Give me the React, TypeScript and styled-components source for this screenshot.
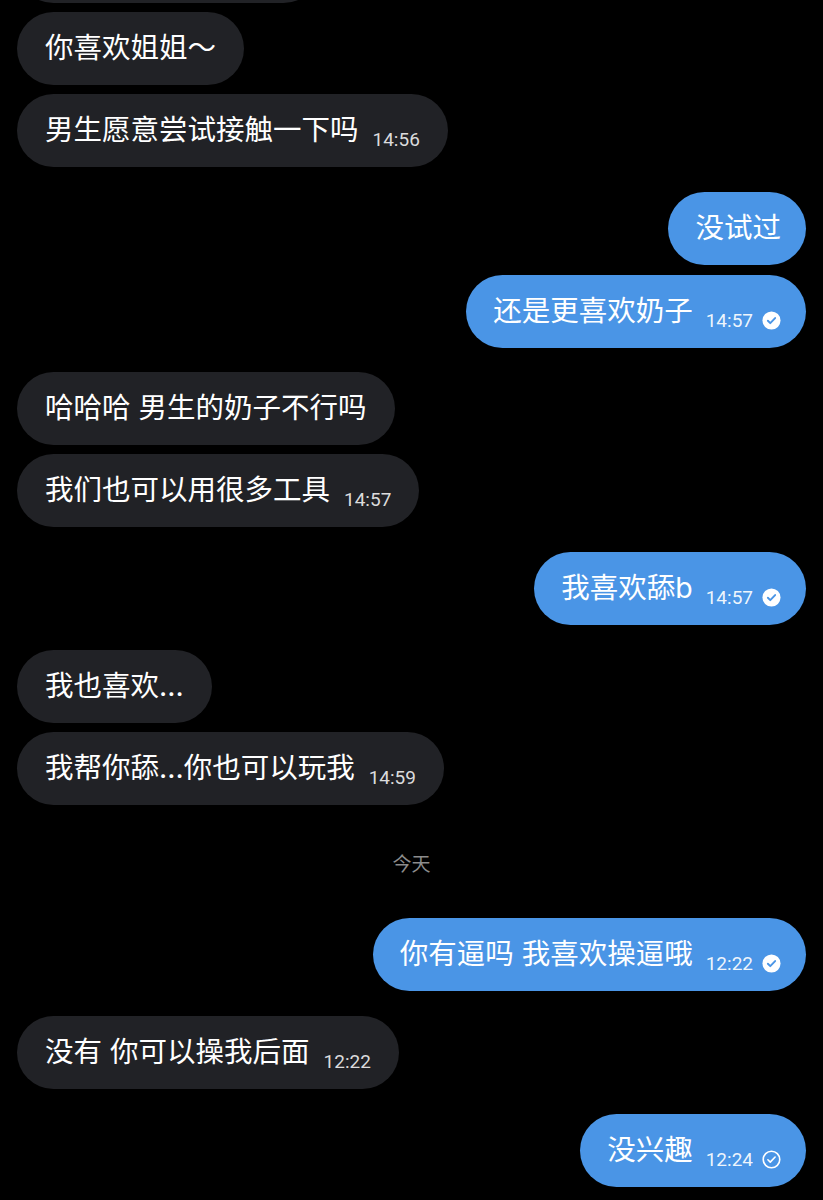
import React from "react";
import styled, { createGlobalStyle } from "styled-components";

const GlobalStyle = createGlobalStyle`
  html, body {
    margin: 0;
    padding: 0;
    background: #000;
  }
  body {
    font-family: "Inter", "Noto Sans CJK SC", sans-serif;
    overflow: hidden;
  }
`;

const Screen = styled.div`
  width: 823px;
  height: 1200px;
  background: #000;
  overflow: hidden;
`;

const List = styled.div`
  display: flex;
  flex-direction: column;
  padding: 0 17px;
  margin-top: -70px;
`;

const Row = styled.div<{ $out?: boolean; $gap: number }>`
  display: flex;
  justify-content: ${(p) => (p.$out ? "flex-end" : "flex-start")};
  margin-top: ${(p) => p.$gap}px;
`;

const Bubble = styled.div<{ $out?: boolean; $width?: number }>`
  display: flex;
  align-items: center;
  height: 73px;
  box-sizing: border-box;
  padding: ${(p) => (p.$out ? "0 25px 0 27px" : "0 28px")};
  border-radius: 37px;
  background: ${(p) => (p.$out ? "#4a95e6" : "#212226")};
  color: #fff;
  ${(p) => (p.$width ? `width: ${p.$width}px;` : "")}
`;

const Text = styled.span`
  font-family: "Inter", "Noto Sans CJK SC", sans-serif;
  font-size: 28.5px;
  line-height: 1;
  white-space: nowrap;
`;

const Meta = styled.span<{ $out?: boolean }>`
  display: flex;
  align-items: center;
  gap: ${(p) => (p.$out ? "9px" : "10px")};
  margin-left: ${(p) => (p.$out ? "13px" : "14px")};
  margin-top: 18px;
  font-family: "Roboto", "Liberation Sans", sans-serif;
  font-size: 19px;
  line-height: 1;
  color: ${(p) => (p.$out ? "rgba(255,255,255,0.92)" : "rgba(255,255,255,0.85)")};
  white-space: nowrap;
`;

const DateRow = styled.div`
  display: flex;
  justify-content: center;
  align-items: center;
  height: 20px;
  margin: 47px 0 0 0;
  font-family: "Noto Sans CJK SC", sans-serif;
  font-size: 19px;
  line-height: 1;
  color: #8c8c8c;
`;

const ReadCheck = () => (
  <svg width="19" height="19" viewBox="0 0 20 20">
    <circle cx="10" cy="10" r="9.5" fill="#fff" />
    <path
      d="M6.2 10.3 L8.7 12.8 L13.8 7.4"
      fill="none"
      stroke="#4a95e6"
      strokeWidth="2"
      strokeLinecap="round"
      strokeLinejoin="round"
    />
  </svg>
);

const SentCheck = () => (
  <svg width="19" height="19" viewBox="0 0 20 20">
    <circle cx="10" cy="10" r="8.7" fill="none" stroke="#fff" strokeWidth="1.7" />
    <path
      d="M6.2 10.3 L8.7 12.8 L13.8 7.4"
      fill="none"
      stroke="#fff"
      strokeWidth="1.7"
      strokeLinecap="round"
      strokeLinejoin="round"
    />
  </svg>
);

type Msg =
  | { kind: "msg"; out?: boolean; text: string; time?: string; status?: "read" | "sent"; gap: number; width?: number }
  | { kind: "date"; text: string };

const messages: Msg[] = [
  { kind: "msg", text: "", gap: 0, width: 303 },
  { kind: "msg", text: "你喜欢姐姐～", gap: 9 },
  { kind: "msg", text: "男生愿意尝试接触一下吗", time: "14:56", gap: 9 },
  { kind: "msg", out: true, text: "没试过", gap: 25 },
  { kind: "msg", out: true, text: "还是更喜欢奶子", time: "14:57", status: "read", gap: 10 },
  { kind: "msg", text: "哈哈哈 男生的奶子不行吗", gap: 24 },
  { kind: "msg", text: "我们也可以用很多工具", time: "14:57", gap: 9 },
  { kind: "msg", out: true, text: "我喜欢舔b", time: "14:57", status: "read", gap: 25 },
  { kind: "msg", text: "我也喜欢...", gap: 25 },
  { kind: "msg", text: "我帮你舔...你也可以玩我", time: "14:59", gap: 9 },
  { kind: "date", text: "今天" },
  { kind: "msg", out: true, text: "你有逼吗 我喜欢操逼哦", time: "12:22", status: "read", gap: 46 },
  { kind: "msg", text: "没有 你可以操我后面", time: "12:22", gap: 25 },
  { kind: "msg", out: true, text: "没兴趣", time: "12:24", status: "sent", gap: 25 },
];

export default function App() {
  return (
    <Screen>
      <GlobalStyle />
      <List>
        {messages.map((m, i) =>
          m.kind === "date" ? (
            <DateRow key={i}>{m.text}</DateRow>
          ) : (
            <Row key={i} $out={m.out} $gap={m.gap}>
              <Bubble $out={m.out} $width={m.width}>
                <Text>{m.text}</Text>
                {m.time && (
                  <Meta $out={m.out}>
                    {m.time}
                    {m.status === "read" && <ReadCheck />}
                    {m.status === "sent" && <SentCheck />}
                  </Meta>
                )}
              </Bubble>
            </Row>
          )
        )}
      </List>
    </Screen>
  );
}
